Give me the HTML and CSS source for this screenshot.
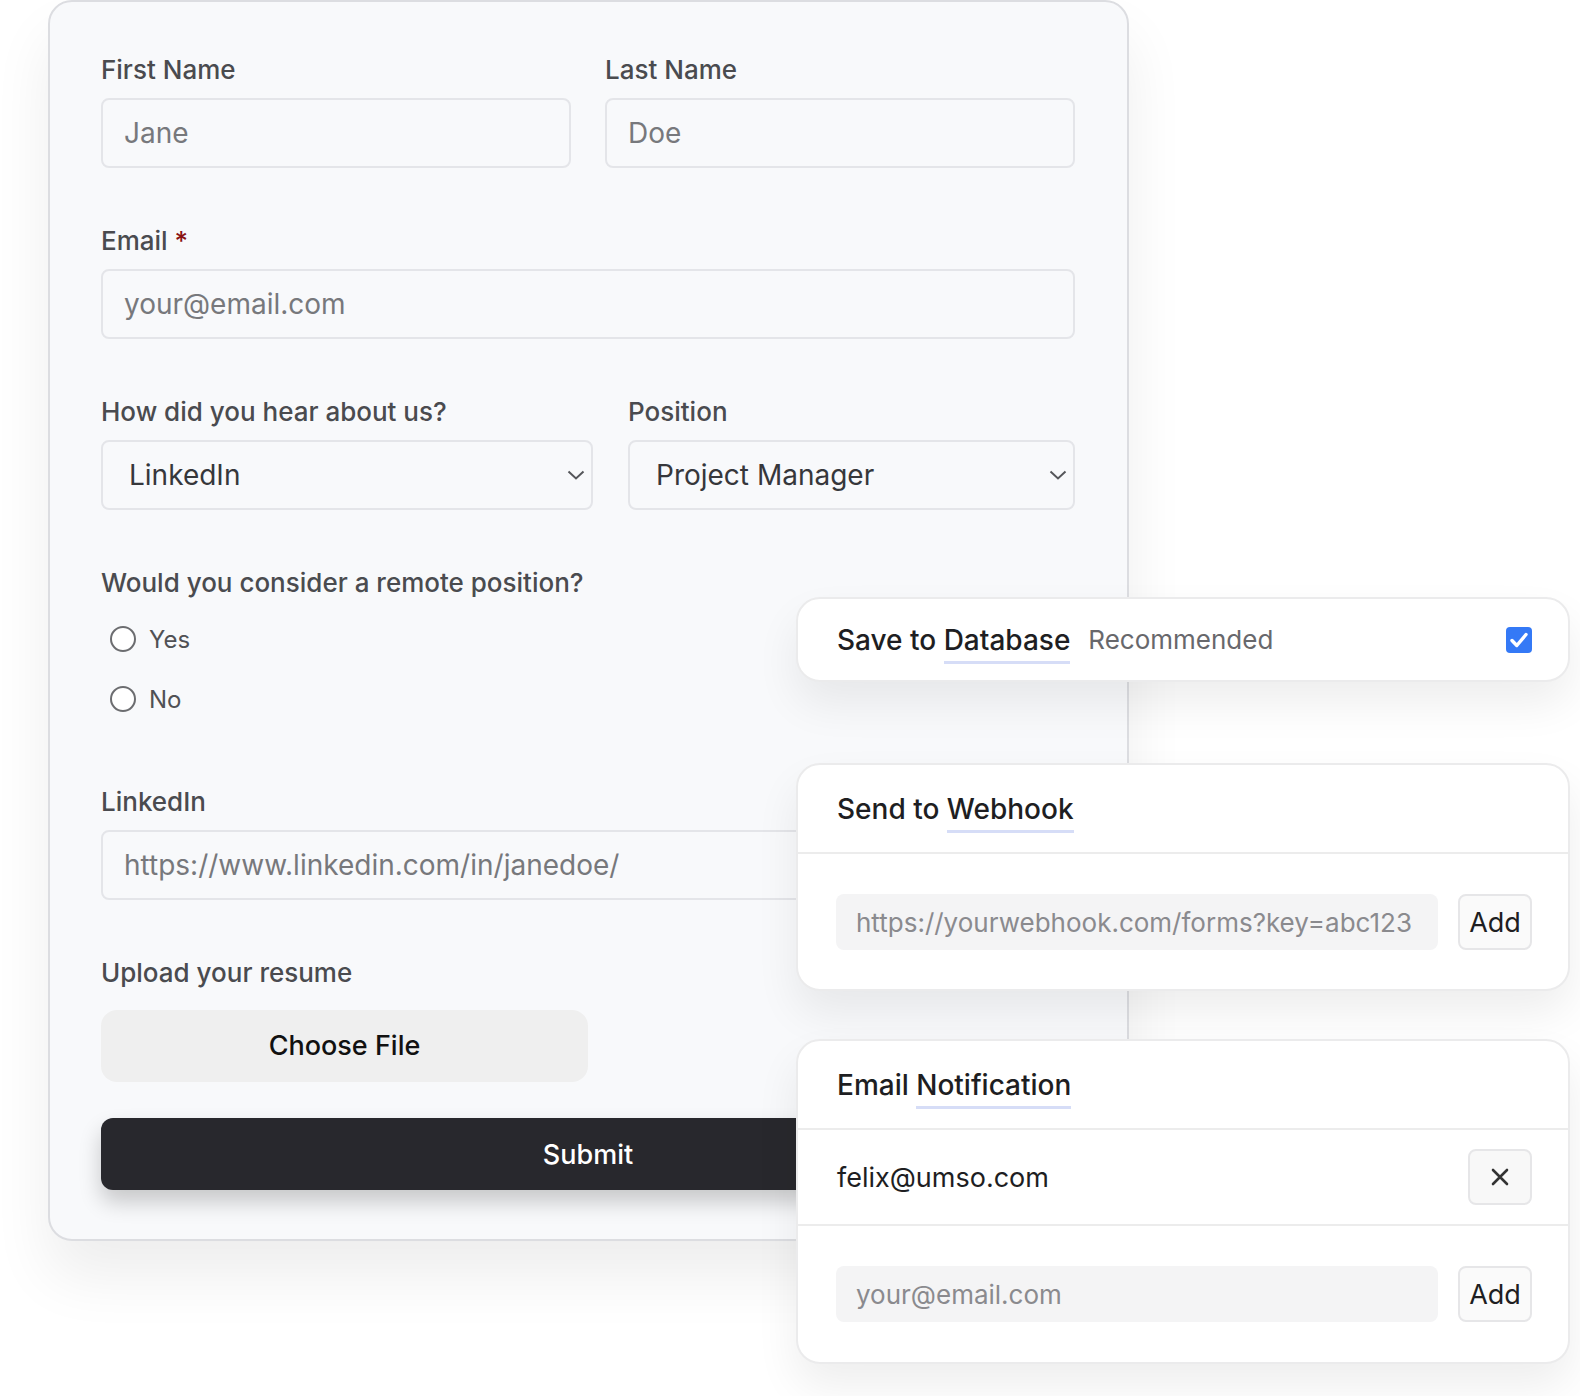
FILE: index.html
```html
<!DOCTYPE html>
<html lang="en">
<head>
  <meta charset="UTF-8">
  <meta name="viewport" content="width=device-width, initial-scale=1.0">
  <title>Job Application Form</title>
  <link rel="stylesheet" href="styles.css">
</head>
<body>

  <div class="stage">
    <form class="card" onsubmit="return false">
      <div class="row names">
        <div class="field">
          <label>First Name</label>
          <input class="input" type="text" placeholder="Jane">
        </div>
        <div class="field">
          <label>Last Name</label>
          <input class="input" type="text" placeholder="Doe">
        </div>
      </div>

      <div class="row">
        <div class="field">
          <label>Email <span class="req">*</span></label>
          <input class="input" type="email" placeholder="your@email.com">
        </div>
      </div>

      <div class="row selects">
        <div class="field">
          <label>How did you hear about us?</label>
          <div class="select-wrap">
            <select class="input select">
              <option>LinkedIn</option>
              <option>Google</option>
              <option>A friend</option>
            </select>
            <svg class="chevron" width="18" height="10" viewBox="0 0 18 10"><polyline points="1.5,1.5 9,8.5 16.5,1.5" fill="none" stroke="#55565a" stroke-width="2"/></svg>
          </div>
        </div>
        <div class="field">
          <label>Position</label>
          <div class="select-wrap">
            <select class="input select">
              <option>Project Manager</option>
              <option>Designer</option>
              <option>Developer</option>
            </select>
            <svg class="chevron" width="18" height="10" viewBox="0 0 18 10"><polyline points="1.5,1.5 9,8.5 16.5,1.5" fill="none" stroke="#55565a" stroke-width="2"/></svg>
          </div>
        </div>
      </div>

      <div class="field radios">
        <label>Would you consider a remote position?</label>
        <div class="radio-row"><input type="radio" name="remote" id="yes"><span>Yes</span></div>
        <div class="radio-row"><input type="radio" name="remote" id="no"><span>No</span></div>
      </div>

      <div class="row">
        <div class="field">
          <label>LinkedIn</label>
          <input class="input" type="text" placeholder="https://www.linkedin.com/in/janedoe/">
        </div>
      </div>

      <div class="field">
        <label>Upload your resume</label>
        <label class="file-btn">Choose File<input type="file" class="hidden"></label>
      </div>

      <button class="submit" type="submit">Submit</button>
    </form>

    <div class="actions">
      <div class="panel panel-db">
        <span class="panel-title">Save to <span class="hl">Database</span></span>
        <span class="muted">Recommended</span>
        <span class="check">
          <svg width="26" height="26" viewBox="0 0 26 26"><polyline points="6,13.5 10.8,18.5 20,7.5" fill="none" stroke="#fff" stroke-width="3.4" stroke-linecap="round" stroke-linejoin="round"/></svg>
        </span>
      </div>

      <div class="panel panel-hook">
        <div class="panel-head"><span class="panel-title">Send to <span class="hl">Webhook</span></span></div>
        <div class="panel-body">
          <input type="text" placeholder="https://yourwebhook.com/forms?key=abc123">
          <button class="add-btn" type="button">Add</button>
        </div>
      </div>

      <div class="panel panel-mail">
        <div class="panel-head"><span class="panel-title">Email <span class="hl">Notification</span></span></div>
        <div class="mail-row">
          <span>felix@umso.com</span>
          <button class="remove-btn" type="button">
            <svg width="18" height="18" viewBox="0 0 18 18"><path d="M2 2 L16 16 M16 2 L2 16" stroke="#333" stroke-width="2.6" stroke-linecap="round"/></svg>
          </button>
        </div>
        <div class="panel-body last">
          <input type="email" placeholder="your@email.com">
          <button class="add-btn" type="button">Add</button>
        </div>
      </div>
    </div>
  </div>

</body>
</html>
```

FILE: styles.css
```css
body {
  margin: 0;
  background: #ffffff;
  font-family: Inter, "Noto Sans", sans-serif;
}
.stage {
  position: relative;
  height: 1396px;
}
.card {
  box-sizing: border-box;
  width: 1081px;
  margin-left: 48px;
  padding: 50px 52px 49px 51px;
  background: #f8f9fb;
  border: 2px solid #dcdde1;
  border-radius: 24px;
  box-shadow: 0 36px 60px rgba(0, 0, 0, 0.07);
}
.row {
  display: grid;
  margin-bottom: 55px;
}
.names {
  grid-template-columns: 1fr 1fr;
  gap: 34px;
}
.selects {
  grid-template-columns: 492px 1fr;
  gap: 35px;
}
.field label {
  display: block;
  font-size: 26px;
  line-height: 36px;
  font-weight: 500;
  color: #4a4b4f;
  margin-bottom: 10px;
}
.req {
  color: #8a1212;
}
.input {
  box-sizing: border-box;
  width: 100%;
  height: 70px;
  padding: 0 21px;
  border: 2px solid #e4e5e9;
  border-radius: 8px;
  background: #f8f9fb;
  font-family: inherit;
  font-size: 28px;
  color: #36373b;
  outline: none;
}
.input::placeholder {
  color: #77787c;
}
.select-wrap {
  position: relative;
}
.select {
  appearance: none;
  -webkit-appearance: none;
  padding-left: 26px;
}
.chevron {
  position: absolute;
  right: 8px;
  top: 30px;
  pointer-events: none;
}
.radios {
  margin-bottom: 55px;
}
.radios label {
  margin-bottom: 8px;
}
.radio-row {
  display: flex;
  align-items: center;
  height: 60px;
  font-size: 24px;
  color: #505155;
}
.radio-row input {
  appearance: none;
  -webkit-appearance: none;
  box-sizing: border-box;
  width: 26px;
  height: 26px;
  margin: 0 13px 0 9px;
  border: 2px solid #6c6d70;
  border-radius: 50%;
  background: #fff;
}
.hidden {
  display: none;
}
.field .file-btn {
  display: flex;
  align-items: center;
  justify-content: center;
  width: 487px;
  height: 72px;
  margin: 19px 0 0;
  border-radius: 16px;
  background: #efefef;
  font-size: 27px;
  font-weight: 500;
  color: #111;
  cursor: pointer;
}
.submit {
  display: block;
  width: 100%;
  height: 72px;
  margin-top: 36px;
  border: none;
  border-radius: 12px;
  background: #28282d;
  color: #ffffff;
  font-family: inherit;
  font-size: 27px;
  font-weight: 500;
  box-shadow: 0 12px 22px rgba(0, 0, 0, 0.2);
  cursor: pointer;
}

/* panels over the form */
.actions {
  position: absolute;
  left: 796px;
  top: 597px;
  width: 774px;
}
.panel {
  box-sizing: border-box;
  background: #ffffff;
  border: 2px solid #ebebec;
  border-radius: 24px;
  box-shadow: 0 22px 44px rgba(0, 0, 0, 0.07);
}
.panel-db {
  display: flex;
  align-items: center;
  height: 85px;
  padding: 0 36px 0 39px;
}
.panel-hook {
  margin-top: 81px;
}
.panel-mail {
  margin-top: 48px;
}
.panel-head {
  padding: 26px 39px 25px;
}
.panel-title {
  font-size: 28px;
  line-height: 36px;
  font-weight: 500;
  color: #1e1e22;
}
.hl {
  border-bottom: 3px solid #d6ddf7;
  padding-bottom: 4px;
}
.muted {
  margin-left: 18px;
  font-size: 26px;
  color: #68686c;
}
.check {
  display: flex;
  margin-left: auto;
  width: 26px;
  height: 26px;
  border-radius: 4px;
  background: #3479f6;
}
.panel-body {
  display: flex;
  gap: 20px;
  padding: 40px 36px 39px 38px;
  border-top: 2px solid #ececec;
}
.panel-body.last {
  padding-bottom: 40px;
}
.panel-body input {
  flex: 1;
  min-width: 0;
  height: 56px;
  padding: 0 20px;
  border: none;
  border-radius: 8px;
  background: #f4f4f5;
  font-family: inherit;
  font-size: 26px;
  color: #333;
  outline: none;
}
.panel-body input::placeholder {
  color: #8a8a8e;
}
.add-btn {
  width: 74px;
  height: 56px;
  border: 2px solid #e6e6e8;
  border-radius: 8px;
  background: #fafafa;
  font-family: inherit;
  font-size: 27px;
  color: #1e1e22;
  cursor: pointer;
}
.mail-row {
  display: flex;
  align-items: center;
  justify-content: space-between;
  padding: 19px 36px 19px 39px;
  border-top: 2px solid #ececec;
  font-size: 27px;
  color: #1e1e22;
}
.remove-btn {
  display: flex;
  align-items: center;
  justify-content: center;
  width: 64px;
  height: 56px;
  border: 2px solid #e6e6e8;
  border-radius: 8px;
  background: #f8f8f8;
  cursor: pointer;
}
```
